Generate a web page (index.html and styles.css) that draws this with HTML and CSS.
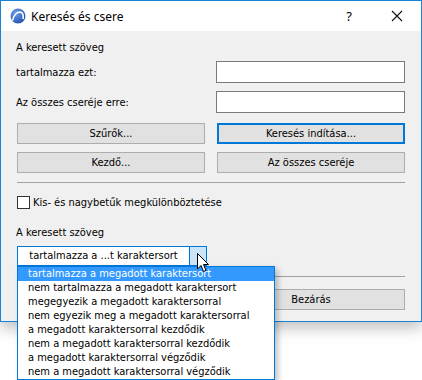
FILE: index.html
```html
<!DOCTYPE html>
<html lang="hu">
  <head>
    <meta charset="UTF-8" />
    <title>Keresés és csere</title>
    <link rel="stylesheet" href="styles.css">
  </head>
  <body>
    <div class="window">
      <div class="titlebar">
        <svg class="app-icon" width="16" height="16" viewBox="0 0 16 16">
          <defs>
            <radialGradient id="g" cx="0.35" cy="0.3" r="0.8">
              <stop offset="0" stop-color="#6f9ee6" />
              <stop offset="1" stop-color="#1f4fb0" />
            </radialGradient>
          </defs>
          <circle cx="8" cy="8" r="7.5" fill="url(#g)" />
          <path d="M2.5 12.5 C4 6 8 3 11.5 4.5 C13 5.5 13.5 8 13 11" fill="none" stroke="#fff" stroke-width="1.6" />
        </svg>
        <span class="title">Keresés és csere</span>
        <span class="help">?</span>
        <svg class="close" width="12" height="12" viewBox="0 0 12 12">
          <path d="M1 1 L11 11 M11 1 L1 11" stroke="#111" stroke-width="1.1" />
        </svg>
      </div>
      <div class="content">
        <div class="caption">A keresett szöveg</div>
        <div class="field-row">
          <label for="find">tartalmazza ezt:</label>
          <input type="text" id="find" />
        </div>
        <div class="field-row">
          <label for="repl">Az összes cseréje erre:</label>
          <input type="text" id="repl" />
        </div>
        <div class="btn-grid">
          <button>Szűrők...</button>
          <button class="focused">Keresés indítása...</button>
          <button>Kezdő...</button>
          <button>Az összes cseréje</button>
        </div>
        <div class="sep"></div>
        <label class="check"><span class="box"></span>Kis- és nagybetűk megkülönböztetése</label>
        <div class="caption caption-2">A keresett szöveg</div>
        <div class="combo">
          <span class="combo-text">tartalmazza a ...t karaktersort</span>
          <span class="combo-btn"></span>
          <svg class="cursor" width="13" height="20" viewBox="0 0 13 20">
            <path d="M0.5 0.5 L0.5 16 L4 12.5 L6.5 18.5 L9 17.5 L6.5 11.5 L11.5 11.5 Z" fill="#fff" stroke="#000" stroke-width="1" />
          </svg>
          <ul class="list">
            <li class="selected">tartalmazza a megadott karaktersort</li>
            <li>nem tartalmazza a megadott karaktersort</li>
            <li>megegyezik a megadott karaktersorral</li>
            <li>nem egyezik meg a megadott karaktersorral</li>
            <li>a megadott karaktersorral kezdődik</li>
            <li>nem a megadott karaktersorral kezdődik</li>
            <li>a megadott karaktersorral végződik</li>
            <li>nem a megadott karaktersorral végződik</li>
          </ul>
        </div>
        <div class="sep sep-2"></div>
        <div class="footer">
          <button>Bezárás</button>
        </div>
      </div>
    </div>
  </body>
</html>
```

FILE: styles.css
```css
html,
body {
  margin: 0;
  min-height: 380px;
  overflow: visible;
}
body {
  background-color: #fff;
  font-family: Tahoma, "DejaVu Sans Condensed", "Liberation Sans", sans-serif;
  font-size: 11px;
  color: #000;
}
.window {
  width: 422px;
  height: 322px;
  box-sizing: border-box;
  border: 1px solid #1883d7;
  background-color: #f0f0f0;
  box-shadow: 0 6px 14px rgba(0, 0, 0, 0.25);
}
.titlebar {
  height: 30px;
  background-color: #fff;
  display: flex;
  align-items: center;
  padding-left: 9px;
  font-family: "Noto Sans", "Liberation Sans", sans-serif;
  font-size: 12px;
}
.app-icon {
  margin-right: 5px;
}
.title {
  flex: 1;
}
.help {
  font-size: 13px;
  margin-right: 39px;
}
.close {
  margin-right: 18px;
}
.content {
  padding: 10px 16px 0 15px;
  position: relative;
}
.caption {
  height: 14px;
  line-height: 14px;
}
.field-row {
  display: flex;
  justify-content: space-between;
  align-items: center;
  margin-top: 6px;
}
.field-row + .field-row {
  margin-top: 8px;
}
.field-row input {
  width: 189px;
  height: 22px;
  box-sizing: border-box;
  border: 1px solid #7a7a7a;
  background-color: #fff;
  margin: 0;
}
.btn-grid {
  display: grid;
  grid-template-columns: 188px 188px;
  justify-content: space-between;
  row-gap: 8px;
  margin-top: 10px;
  padding-left: 1px;
}
button {
  height: 21px;
  box-sizing: border-box;
  border: 1px solid #adadad;
  background-color: #e1e1e1;
  font-family: inherit;
  font-size: 11px;
  color: #000;
  padding: 0;
  margin: 0;
}
button.focused {
  border: 2px solid #0078d7;
}
.sep {
  height: 1px;
  background-color: #a0a0a0;
  margin-top: 9px;
  margin-left: 1px;
}
.check {
  display: flex;
  align-items: center;
  margin-top: 13px;
  height: 13px;
}
.box {
  width: 13px;
  height: 13px;
  box-sizing: border-box;
  border: 1px solid #333;
  background-color: #fff;
  margin-right: 3px;
  margin-left: 1px;
}
.caption-2 {
  margin-top: 17px;
}
.combo {
  position: relative;
  margin-top: 6px;
  margin-left: 1px;
  width: 190px;
  height: 20px;
  box-sizing: border-box;
  border: 1px solid #0078d7;
  background-color: #fff;
  display: flex;
  z-index: 2;
}
.combo-text {
  flex: 1;
  text-align: center;
  line-height: 18px;
}
.combo-btn {
  width: 16px;
  border-left: 1px solid #0078d7;
  background-color: #cce4f7;
}
.cursor {
  position: absolute;
  left: 179px;
  top: 6px;
  z-index: 3;
}
.list {
  position: absolute;
  left: -1px;
  top: 19px;
  width: 256px;
  margin: 0;
  padding: 0;
  list-style: none;
  background-color: #fff;
  border: 1px solid #0078d7;
  box-shadow: 3px 3px 6px rgba(0, 0, 0, 0.25);
  z-index: 2;
}
.list li {
  height: 14px;
  line-height: 14px;
  padding-left: 10px;
}
.list li.selected {
  background-color: #3399ff;
  color: #fff;
}
.sep-2 {
  margin-top: 10px;
}
.footer {
  display: flex;
  justify-content: flex-end;
  margin-top: 12px;
}
.footer button {
  width: 188px;
}
```
